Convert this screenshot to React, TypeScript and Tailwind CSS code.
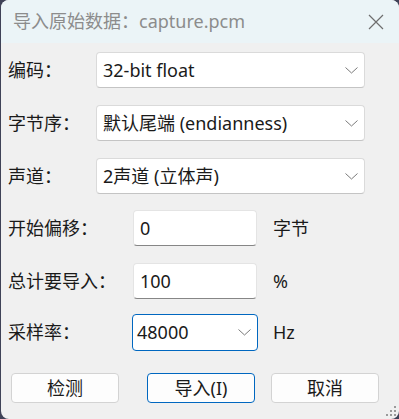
import React from 'react';

const font = { fontFamily: '"Noto Sans", "Noto Sans CJK SC", sans-serif' };

const Chevron = () => (
  <svg width="13" height="7" viewBox="0 0 13 7" className="shrink-0">
    <path d="M0.5 0.5 L6.5 6 L12.5 0.5" fill="none" stroke="#7a7a7a" strokeWidth="1" />
  </svg>
);

const Combo = ({ value }: { value: string }) => (
  <div className="flex h-[36px] w-[269px] items-center justify-between rounded-[4px] border border-[#dadada] border-b-[#c4c4c4] bg-white pl-[6px] pr-[6px] text-[18px] text-[#1a1a1a]">
    <span>{value}</span>
    <Chevron />
  </div>
);

const Field = ({ value }: { value: string }) => (
  <div className="flex h-[36px] w-[124px] items-center rounded-[4px] border border-[#e4e4e4] border-b-[#868686] bg-white pl-[6px] text-[18px] text-[#1a1a1a]">
    {value}
  </div>
);

const Button = ({ label, primary }: { label: string; primary?: boolean }) => (
  <button
    className={
      'flex h-[30px] w-[108px] items-center justify-center rounded-[4px] border bg-[#fdfdfd] text-[18px] text-[#1a1a1a] ' +
      (primary ? 'border-[#0067c0]' : 'border-[#d3d3d3]')
    }
  >
    {label}
  </button>
);

export default function App() {
  return (
    <div className="h-[419px] w-[399px] bg-[#3f4257] pl-[1px]" style={font}>
      <div className="relative flex h-full flex-col overflow-hidden rounded-[8px] bg-[#f0f0f0]">
        <div className="flex h-[43px] shrink-0 items-center justify-between bg-[#ebf4f7] pl-[12px] pr-[15px]">
          <span className="text-[18px] text-[#8c8c8c]">导入原始数据：capture.pcm</span>
          <svg width="16" height="16" viewBox="0 0 16 16">
            <path d="M1 1 L15 15 M15 1 L1 15" stroke="#6e6e6e" strokeWidth="1.2" fill="none" />
          </svg>
        </div>

        <div className="flex flex-col pl-[7px] text-[18px] text-[#1a1a1a]">
          <div className="mt-[9px] flex items-center">
            <span className="w-[88px]">编码：</span>
            <Combo value="32-bit float" />
          </div>
          <div className="mt-[17px] flex items-center">
            <span className="w-[88px]">字节序：</span>
            <Combo value="默认尾端 (endianness)" />
          </div>
          <div className="mt-[17px] flex items-center">
            <span className="w-[88px]">声道：</span>
            <Combo value="2声道 (立体声)" />
          </div>
          <div className="mt-[16px] flex items-center">
            <span className="w-[125px]">开始偏移：</span>
            <Field value="0" />
            <span className="ml-[16px]">字节</span>
          </div>
          <div className="mt-[17px] flex items-center">
            <span className="w-[125px]">总计要导入：</span>
            <Field value="100" />
            <span className="ml-[16px]">%</span>
          </div>
          <div className="mt-[15px] flex items-center">
            <span className="w-[124px]">采样率：</span>
            <div className="flex h-[37px] w-[126px] items-center justify-between rounded-[4px] border-[1.5px] border-[#0067c0] bg-white pl-[4px] pr-[6px]">
              <span>48000</span>
              <Chevron />
            </div>
            <span className="ml-[15px]">Hz</span>
          </div>
          <div className="mt-[22px] flex items-center pl-[3px]">
            <Button label="检测" />
            <div className="ml-[28px]">
              <Button label="导入(I)" primary />
            </div>
            <div className="ml-[16px]">
              <Button label="取消" />
            </div>
          </div>
        </div>

        <svg className="absolute bottom-[2px] right-[2px]" width="12" height="12" viewBox="0 0 12 12">
          <rect x="9" y="1" width="2" height="2" fill="#9a9a9a" />
          <rect x="5" y="5" width="2" height="2" fill="#9a9a9a" />
          <rect x="9" y="5" width="2" height="2" fill="#9a9a9a" />
          <rect x="1" y="9" width="2" height="2" fill="#9a9a9a" />
          <rect x="5" y="9" width="2" height="2" fill="#9a9a9a" />
          <rect x="9" y="9" width="2" height="2" fill="#9a9a9a" />
        </svg>
      </div>
    </div>
  );
}
